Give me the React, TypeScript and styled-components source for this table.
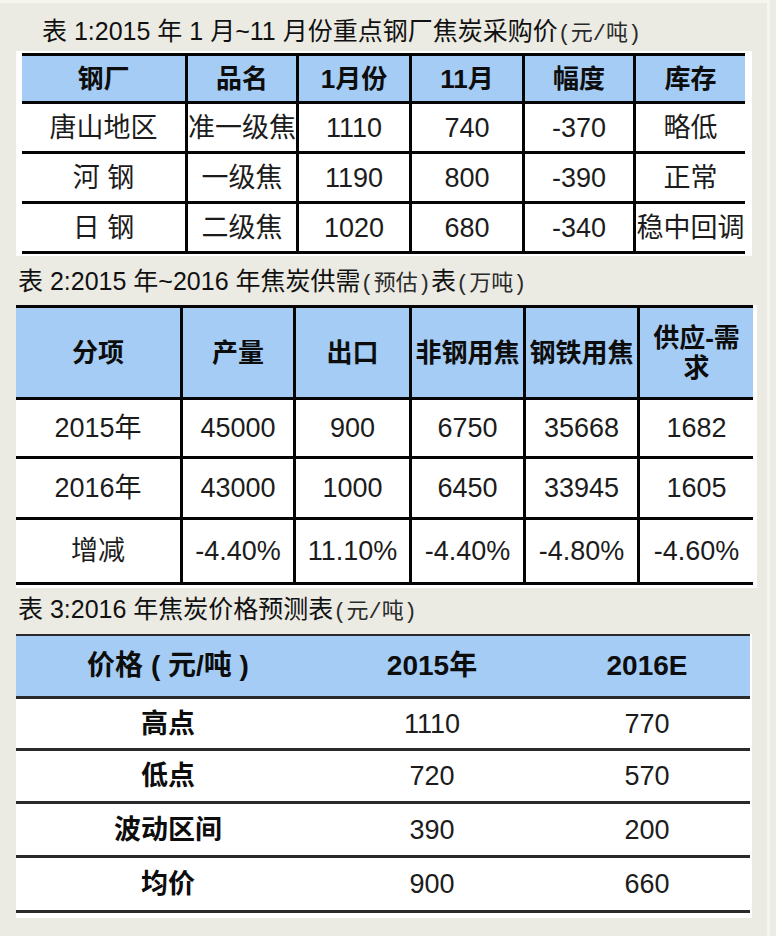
import React from "react";
import styled, { createGlobalStyle } from "styled-components";

const GlobalStyle = createGlobalStyle`
  html, body {
    margin: 0;
    padding: 0;
    background: #ebebe3;
  }
  body {
    font-family: "Liberation Sans", "Noto Sans CJK SC", sans-serif;
    color: #151515;
  }
`;

const Page = styled.main`
  box-sizing: border-box;
  width: 770px;
  min-height: 936px;
  padding: 13px 0 0 16px;
  border-top: 3px solid #f5f5f0;
  border-right: 3px solid #f5f5f0;
  display: flex;
  flex-direction: column;
  align-items: flex-start;
`;

const Caption = styled.h2<{ $indent: number; $gap: number }>`
  box-sizing: border-box;
  height: 30px;
  margin: ${(p) => p.$gap}px 0 0 ${(p) => p.$indent}px;
  font-family: "Liberation Sans", "Noto Sans CJK SC", sans-serif;
  font-size: 25px;
  line-height: 30px;
  font-weight: 400;
  color: #111;
  white-space: nowrap;
  overflow: visible;
`;

const Unit = styled.span`
  font-family: "Liberation Mono", "Noto Sans CJK SC", monospace;
  font-size: 22px;
  line-height: 1;
  color: #2a2a2a;
`;

const Panel = styled.section<{ $gap: number; $pad: string; $width: number }>`
  box-sizing: border-box;
  margin-top: ${(p) => p.$gap}px;
  width: ${(p) => p.$width}px;
  padding: ${(p) => p.$pad};
  background: #ffffff;
`;

const Grid = styled.div<{ $cols: string; $rows: string }>`
  display: grid;
  grid-template-columns: ${(p) => p.$cols};
  grid-template-rows: ${(p) => p.$rows};
`;

const Cell = styled.div<{
  $head?: boolean;
  $divided?: boolean;
  $rule: string;
  $top?: number;
  $strong?: boolean;
  $size: number;
}>`
  box-sizing: border-box;
  display: flex;
  align-items: center;
  justify-content: center;
  text-align: center;
  white-space: pre-line;
  overflow: visible;
  background: ${(p) => (p.$head ? "#a4ccf5" : "#ffffff")};
  border-top: ${(p) => (p.$top ? `${p.$top}px solid ${p.$rule}` : "none")};
  border-bottom: 3px solid ${(p) => p.$rule};
  border-left: ${(p) => (p.$divided ? `3px solid #050505` : "none")};
  font-family: "Liberation Sans", "Noto Sans CJK SC", sans-serif;
  font-size: ${(p) => p.$size}px;
  line-height: 30px;
  font-weight: ${(p) => (p.$head || p.$strong ? 700 : 400)};
  color: ${(p) => (p.$head || p.$strong ? "#0d0d0d" : "#1c1c1c")};
`;

const NoWrap = styled.span`
  white-space: nowrap;
`;

type TableSpec = {
  cols: string;
  rows: string;
  head: string[];
  body: string[][];
  rule: string;
  headTop: number;
  headSize: number;
  divided: boolean;
  strongFirst?: boolean;
};

const t1: TableSpec = {
  cols: "163px 111px 113px 113px 111px 112px",
  rows: "51px 50px 50px 50px",
  head: ["钢厂", "品名", "1月份", "11月", "幅度", "库存"],
  body: [
    ["唐山地区", "准一级焦", "1110", "740", "-370", "略低"],
    ["河 钢", "一级焦", "1190", "800", "-390", "正常"],
    ["日 钢", "二级焦", "1020", "680", "-340", "稳中回调"],
  ],
  rule: "#050505",
  headTop: 3,
  headSize: 26,
  divided: true,
};

const t2: TableSpec = {
  cols: "164px 113px 116px 114px 114px 116px",
  rows: "95px 59px 61px 65px",
  head: ["分项", "产量", "出口", "非钢用焦", "钢铁用焦", "供应-需\n求"],
  body: [
    ["2015年", "45000", "900", "6750", "35668", "1682"],
    ["2016年", "43000", "1000", "6450", "33945", "1605"],
    ["增减", "-4.40%", "11.10%", "-4.40%", "-4.80%", "-4.60%"],
  ],
  rule: "#050505",
  headTop: 3,
  headSize: 26,
  divided: true,
};

const t3: TableSpec = {
  cols: "304px 224px 206px",
  rows: "65px 52px 53px 54px 55px",
  head: ["价格 ( 元/吨 )", "2015年", "2016E"],
  body: [
    ["高点", "1110", "770"],
    ["低点", "720", "570"],
    ["波动区间", "390", "200"],
    ["均价", "900", "660"],
  ],
  rule: "#2a2a2a",
  headTop: 2,
  headSize: 28,
  divided: false,
  strongFirst: true,
};

function DataTable({ spec }: { spec: TableSpec }) {
  return (
    <Grid $cols={spec.cols} $rows={spec.rows} role="table">
      {spec.head.map((h, i) => (
        <Cell
          key={`h${i}`}
          role="columnheader"
          $head
          $size={spec.headSize}
          $rule={spec.rule}
          $top={spec.headTop}
          $divided={spec.divided && i > 0}
        >
          {h}
        </Cell>
      ))}
      {spec.body.map((row, r) =>
        row.map((v, i) => (
          <Cell
            key={`r${r}c${i}`}
            role="cell"
            $size={27}
            $rule={spec.rule}
            $divided={spec.divided && i > 0}
            $strong={spec.strongFirst && i === 0}
          >
            <NoWrap>{v}</NoWrap>
          </Cell>
        ))
      )}
    </Grid>
  );
}

export default function App() {
  return (
    <>
      <GlobalStyle />
      <Page>
        <Caption $indent={26} $gap={0}>
          表 1:2015 年 1 月~11 月份重点钢厂焦炭采购价<Unit>(元/吨)</Unit>
        </Caption>
        <Panel $gap={5} $width={736} $pad="2px 7px 2px 6px">
          <DataTable spec={t1} />
        </Panel>

        <Caption $indent={2} $gap={10}>
          表 2:2015 年~2016 年焦炭供需<Unit>(预估)</Unit>表<Unit>(万吨)</Unit>
        </Caption>
        <Panel $gap={9} $width={741} $pad="0 4px 3px 0">
          <DataTable spec={t2} />
        </Panel>

        <Caption $indent={2} $gap={6}>
          表 3:2016 年焦炭价格预测表<Unit>(元/吨)</Unit>
        </Caption>
        <Panel $gap={10} $width={736} $pad="0 2px 5px 0">
          <DataTable spec={t3} />
        </Panel>
      </Page>
    </>
  );
}
